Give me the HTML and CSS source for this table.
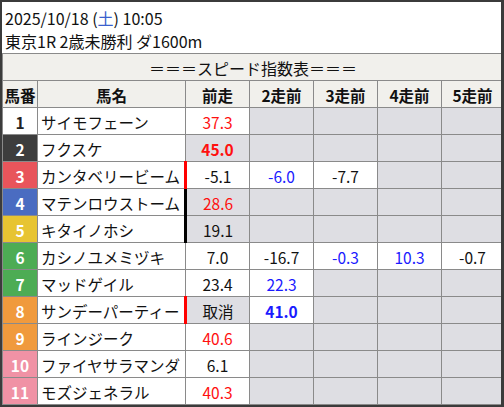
FILE: index.html
```html
<!DOCTYPE html>
<html lang="ja">
<head>
<meta charset="utf-8">
<link rel="stylesheet" href="styles.css">
</head>
<body>
<div class="frame">
  <div class="info">
    <div class="line">2025/10/18 (<span class="sat">土</span>) 10:05</div>
    <div class="line">東京1R 2歳未勝利 ダ1600m</div>
  </div>
  <table class="speed">
    <colgroup>
      <col class="c-no"><col class="c-name"><col class="c-run"><col class="c-run"><col class="c-run"><col class="c-run4"><col class="c-run5">
    </colgroup>
    <thead>
      <tr><th colspan="7" class="title">＝＝＝スピード指数表＝＝＝</th></tr>
      <tr class="hd"><th>馬番</th><th>馬名</th><th>前走</th><th>2走前</th><th>3走前</th><th>4走前</th><th>5走前</th></tr>
    </thead>
    <tbody>
      <tr><td class="no w1">1</td><td class="name">サイモフェーン</td><td class="red">37.3</td><td class="e"></td><td class="e"></td><td class="e"></td><td class="e"></td></tr>
      <tr><td class="no w2">2</td><td class="name">フクスケ</td><td class="e red b">45.0</td><td class="e"></td><td class="e"></td><td class="e"></td><td class="e"></td></tr>
      <tr><td class="no w3">3</td><td class="name">カンタベリービーム</td><td class="mk-red">-5.1</td><td class="blue">-6.0</td><td>-7.7</td><td class="e"></td><td class="e"></td></tr>
      <tr><td class="no w4">4</td><td class="name">マテンロウストーム</td><td class="e red mk-blk">28.6</td><td class="e"></td><td class="e"></td><td class="e"></td><td class="e"></td></tr>
      <tr><td class="no w5">5</td><td class="name">キタイノホシ</td><td class="e mk-blk">19.1</td><td class="e"></td><td class="e"></td><td class="e"></td><td class="e"></td></tr>
      <tr><td class="no w6">6</td><td class="name">カシノユメミヅキ</td><td>7.0</td><td>-16.7</td><td class="blue">-0.3</td><td class="blue">10.3</td><td>-0.7</td></tr>
      <tr><td class="no w6">7</td><td class="name">マッドゲイル</td><td>23.4</td><td class="blue">22.3</td><td class="e"></td><td class="e"></td><td class="e"></td></tr>
      <tr><td class="no w7">8</td><td class="name">サンデーパーティー</td><td class="e mk-red">取消</td><td class="blue b">41.0</td><td class="e"></td><td class="e"></td><td class="e"></td></tr>
      <tr><td class="no w7">9</td><td class="name">ラインジーク</td><td class="red">40.6</td><td class="e"></td><td class="e"></td><td class="e"></td><td class="e"></td></tr>
      <tr><td class="no w8">10</td><td class="name">ファイヤサラマンダ</td><td>6.1</td><td class="e"></td><td class="e"></td><td class="e"></td><td class="e"></td></tr>
      <tr><td class="no w8">11</td><td class="name">モズジェネラル</td><td class="red">40.3</td><td class="e"></td><td class="e"></td><td class="e"></td><td class="e"></td></tr>
    </tbody>
  </table>
</div>
</body>
</html>
```
FILE: styles.css
```css
html, body {
  margin: 0;
  padding: 0;
  background: #ffffff;
}
body {
  font-family: "Noto Sans CJK JP", "Noto Sans", sans-serif;
  font-size: 15.5px;
  color: #111;
}
.frame {
  width: 504px;
  height: 407px;
  box-sizing: border-box;
  border: 2px solid #3b3b3b;
  border-right-width: 3px;
  border-bottom-width: 2px;
  background: #fff;
  overflow: hidden;
}
.info {
  height: 51px;
  padding: 5px 0 0 3px;
  box-sizing: border-box;
  font-size: 16px;
}
.line {
  height: 23px;
  line-height: 23px;
}
.sat { color: #3a5fcd; }
.speed {
  border-collapse: collapse;
  table-layout: fixed;
  width: 499px;
}
.c-no { width: 35px; }
.c-name { width: 148px; }
.c-run { width: 64px; }
.c-run4 { width: 64px; }
.c-run5 { width: 62px; }
.speed th, .speed td {
  border: 1px solid #8a8a8a;
  height: 27px;
  padding: 1px 0 0;
  text-align: center;
  box-sizing: border-box;
  line-height: 20px;
  white-space: nowrap;
  overflow: hidden;
}
.speed th {
  background: #f1f0ec;
}
.title { font-weight: normal; font-size: 16px; }
.hd th { font-weight: bold; }
.speed td.name {
  text-align: left;
  padding-left: 3px;
}
.no { font-weight: bold; color: #fff; }
.w1 { background: #fff; color: #222; }
.w2 { background: #3d3d3d; }
.w3 { background: #e8555b; }
.w4 { background: #4a6cc1; }
.w5 { background: #e7c432; }
.w6 { background: #4dac54; }
.w7 { background: #f09a3d; }
.w8 { background: #f092a5; }
.e { background: #dedee3; }
.red { color: #ff1010; }
.blue { color: #1a1aff; }
.b { font-weight: bold; }
.speed td.mk-red { border-left: 3px solid #ff0000; }
.speed td.mk-blk { border-left: 3px solid #000; }
```
